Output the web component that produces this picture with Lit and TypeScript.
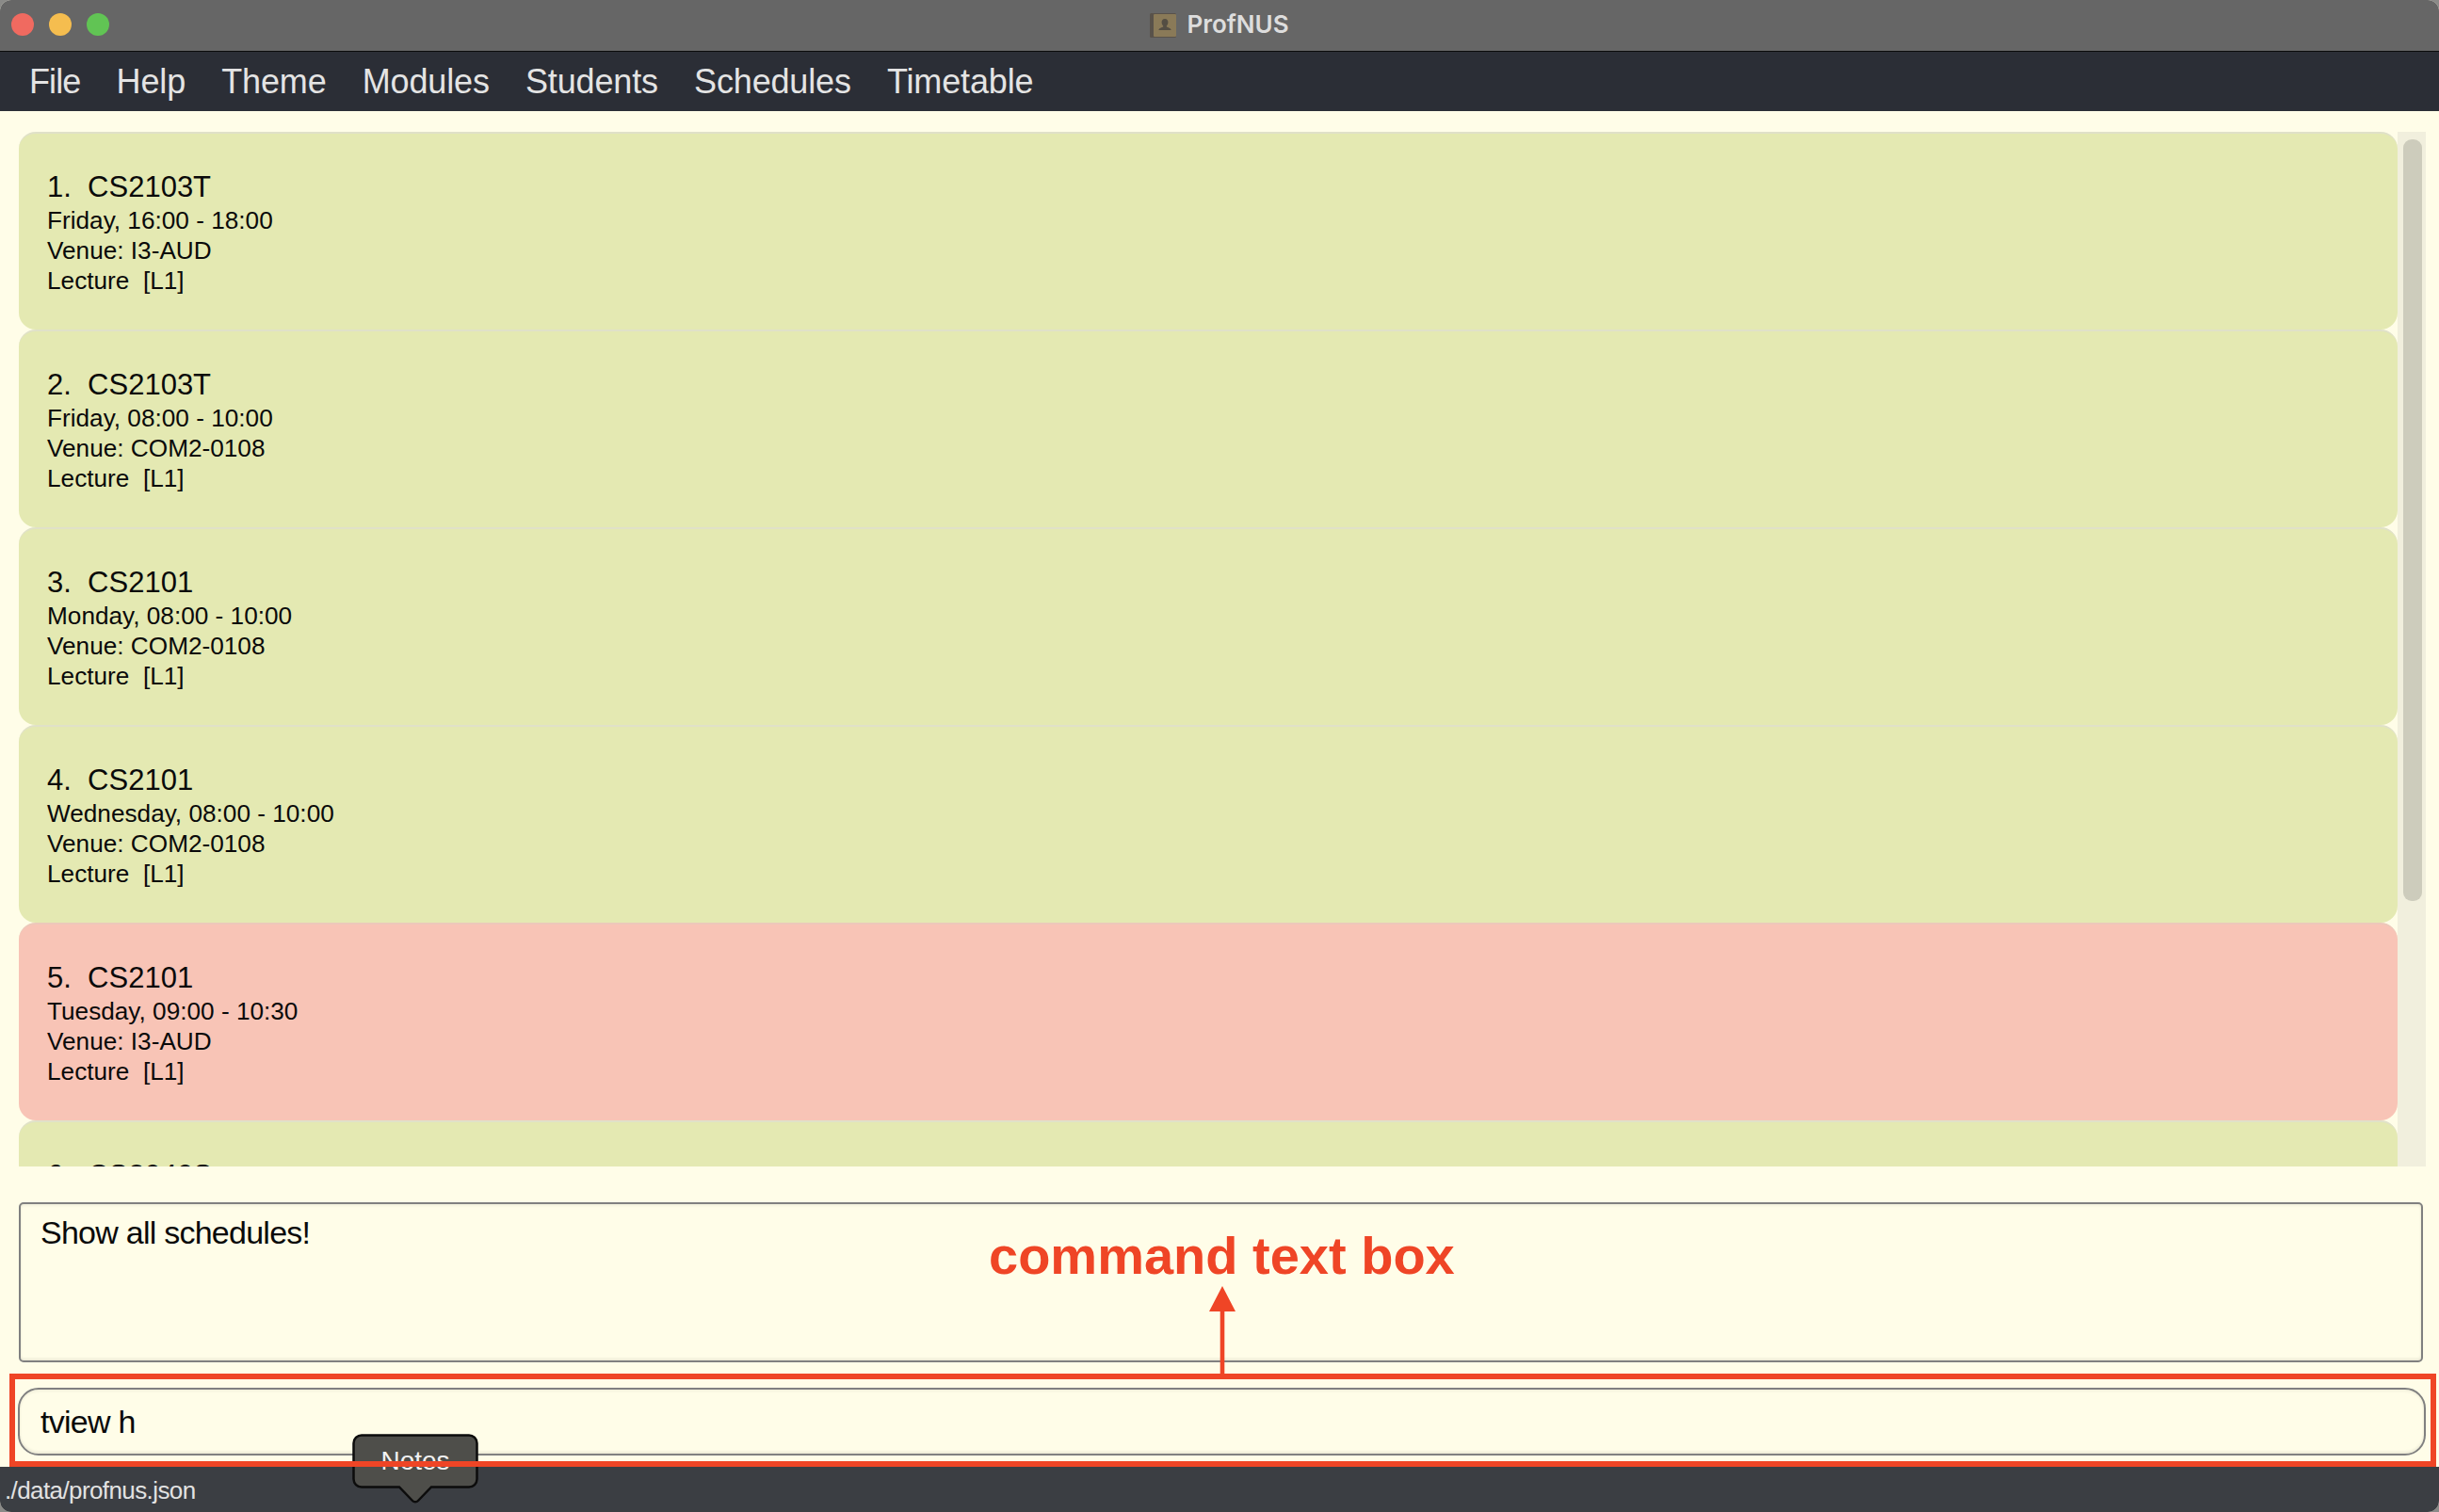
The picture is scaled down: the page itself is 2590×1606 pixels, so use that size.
import { LitElement, html, css, svg } from "lit";
import { customElement } from "lit/decorators.js";

interface Schedule {
  code: string;
  time: string;
  venue: string;
  clash?: boolean;
}

const MENUS = ["File", "Help", "Theme", "Modules", "Students", "Schedules", "Timetable"];

const SCHEDULES: Schedule[] = [
  { code: "CS2103T", time: "Friday, 16:00 - 18:00", venue: "I3-AUD" },
  { code: "CS2103T", time: "Friday, 08:00 - 10:00", venue: "COM2-0108" },
  { code: "CS2101", time: "Monday, 08:00 - 10:00", venue: "COM2-0108" },
  { code: "CS2101", time: "Wednesday, 08:00 - 10:00", venue: "COM2-0108" },
  { code: "CS2101", time: "Tuesday, 09:00 - 10:30", venue: "I3-AUD", clash: true },
  { code: "CS2040S", time: "Monday, 10:00 - 12:00", venue: "I3-AUD" },
];

@customElement("app-root")
export class AppRoot extends LitElement {
  static styles = css`
    :host {
      display: block;
      position: relative;
      width: 2590px;
      height: 1606px;
      overflow: hidden;
      background: #8a8a88;
      font-family: "Liberation Sans", sans-serif;
    }

    .window {
      display: flex;
      flex-direction: column;
      height: 100%;
      border-radius: 12px;
      overflow: hidden;
      background: #fffde8;
    }

    .titlebar {
      position: relative;
      display: flex;
      align-items: center;
      justify-content: center;
      flex: none;
      height: 54px;
      background: #666666;
      border-bottom: 1px solid #0c0c0c;
    }

    .lights {
      position: absolute;
      left: 12px;
      top: 14px;
      display: flex;
      gap: 16px;
    }

    .light {
      width: 24px;
      height: 24px;
      border-radius: 50%;
    }

    .red { background: #f06a60; }
    .yellow { background: #f5bd4f; }
    .green { background: #61c454; }

    .title {
      display: flex;
      align-items: center;
      gap: 11px;
      font-family: Inter, sans-serif;
      font-weight: 600;
      font-size: 26px;
      line-height: 30px;
      color: #dddddd;
    }

    .title span {
      margin-top: -2px;
    }

    .menubar {
      display: flex;
      flex: none;
      gap: 38.2px;
      align-items: center;
      height: 63px;
      padding-left: 31px;
      background: #2b2e36;
      color: #e4e4e4;
      font-size: 36px;
      letter-spacing: -0.15px;
    }

    .menubar span:first-child {
      letter-spacing: -0.9px;
    }

    .list-row {
      display: flex;
      flex: none;
      height: 1099px;
      margin: 22px 14px 0 20px;
    }

    .list {
      flex: 1;
      min-width: 0;
      overflow: hidden;
    }

    .card {
      box-sizing: border-box;
      height: 210px;
      padding: 39px 0 0 30px;
      border-top: 2px solid #e0e1c8;
      border-radius: 18px;
      background: #e4e9b2;
      color: #0a0a0a;
    }

    .card.clash {
      border-top-color: #ecc8ba;
      background: #f8c4b6;
    }

    .card-title {
      margin-bottom: 1px;
      font-size: 31px;
      line-height: 36px;
      white-space: pre;
    }

    .card-line {
      font-size: 26.2px;
      line-height: 32px;
      white-space: pre;
    }

    .scrollbar {
      flex: none;
      box-sizing: border-box;
      width: 30px;
      padding: 8px 4px 0 6px;
      background: #f1efdd;
    }

    .thumb {
      height: 809px;
      border-radius: 9px;
      background: #cdccbc;
    }

    .result {
      flex: none;
      box-sizing: border-box;
      height: 170px;
      margin: 38px 17px 0 20px;
      padding: 10px 21px;
      border: 2px solid #808080;
      border-radius: 5px;
      box-shadow: inset 0 -2px 3px rgba(0, 0, 0, 0.08), inset 0 2px 3px rgba(0, 0, 0, 0.05);
      color: #0a0a0a;
      font-size: 34px;
      line-height: 40px;
      letter-spacing: -0.75px;
    }

    .command {
      flex: none;
      box-sizing: border-box;
      display: flex;
      align-items: center;
      height: 72px;
      margin: 27px 14px 0 19px;
      padding-left: 22px;
      border: 2px solid #808080;
      border-radius: 22px;
      box-shadow: inset 0 -2px 3px rgba(0, 0, 0, 0.08), inset 0 2px 3px rgba(0, 0, 0, 0.05);
      color: #0a0a0a;
      font-size: 34px;
      letter-spacing: -0.75px;
    }

    .statusbar {
      display: flex;
      flex: none;
      align-items: center;
      box-sizing: border-box;
      height: 48px;
      margin-top: 12px;
      padding: 2px 0 0 5px;
      background: #3b3e43;
      color: #e2e2e2;
      font-size: 26px;
      letter-spacing: -0.6px;
    }

    .tooltip {
      position: absolute;
      left: 374px;
      top: 1523px;
      width: 134px;
      height: 74px;
    }

    .tooltip svg {
      display: block;
    }

    .tooltip-label {
      position: absolute;
      left: 0;
      right: 0;
      top: 12px;
      text-align: center;
      color: #f2f2f2;
      font-size: 28px;
      line-height: 34px;
    }

    .callout {
      position: absolute;
      left: 10px;
      top: 1459px;
      box-sizing: border-box;
      width: 2577px;
      height: 99px;
      border: 6px solid #ef4526;
    }

    .callout-label {
      position: absolute;
      left: 1050px;
      top: 1302px;
      color: #ef4526;
      font-size: 56px;
      font-weight: 700;
      line-height: 64px;
    }

    .callout-arrow {
      position: absolute;
      left: 1280px;
      top: 1362px;
    }
  `;

  private renderIcon() {
    return html`<svg width="28" height="26" viewBox="0 0 28 26">
      <rect x="0" y="0" width="28" height="26" rx="1.5" fill="#59524a"></rect>
      <rect x="4" y="1" width="24" height="24" rx="1" fill="#8a7a58"></rect>
      ${svg`<path d="M16 6c-2.4 0-3.6 1.8-3.4 4 .1 1.6.8 2.8 1.6 3.4v1.2c-1.6.7-4.4 1.2-4.9 3.4h13.4c-.5-2.2-3.3-2.7-4.9-3.4v-1.2c.8-.6 1.5-1.8 1.6-3.4.2-2.2-1-4-3.4-4z" fill="#544e43"></path>`}
    </svg>`;
  }

  private renderCard(item: Schedule, index: number) {
    return html`
      <div class="card ${item.clash ? "clash" : ""}">
        <div class="card-title">${index + 1}.  ${item.code}</div>
        <div class="card-line">${item.time}</div>
        <div class="card-line">Venue: ${item.venue}</div>
        <div class="card-line">Lecture  [L1]</div>
      </div>
    `;
  }

  render() {
    return html`
      <div class="window">
        <div class="titlebar">
          <div class="lights">
            <div class="light red"></div>
            <div class="light yellow"></div>
            <div class="light green"></div>
          </div>
          <div class="title">${this.renderIcon()}<span>ProfNUS</span></div>
        </div>
        <div class="menubar">${MENUS.map((m) => html`<span>${m}</span>`)}</div>
        <div class="list-row">
          <div class="list">${SCHEDULES.map((s, i) => this.renderCard(s, i))}</div>
          <div class="scrollbar"><div class="thumb"></div></div>
        </div>
        <div class="result">Show all schedules!</div>
        <div class="command">tview h</div>
        <div class="statusbar">./data/profnus.json</div>
      </div>

      <div class="tooltip">
        <svg width="134" height="74" viewBox="0 0 134 74">
          <path
            d="M10 1.5H124a8.5 8.5 0 0 1 8.5 8.5V48a8.5 8.5 0 0 1-8.5 8.5H84L70 71a4 4 0 0 1-6 0L50 56.5H10A8.5 8.5 0 0 1 1.5 48V10A8.5 8.5 0 0 1 10 1.5z"
            fill="#4e4e4a"
            stroke="#0c0c0c"
            stroke-width="2.5"
          ></path>
        </svg>
        <div class="tooltip-label">Notes</div>
      </div>

      <div class="callout"></div>
      <div class="callout-label">command text box</div>
      <svg class="callout-arrow" width="36" height="100" viewBox="0 0 36 100">
        <path d="M18 4L32 31H20.3V98H15.7V31H4z" fill="#ef4526"></path>
      </svg>
    `;
  }
}
